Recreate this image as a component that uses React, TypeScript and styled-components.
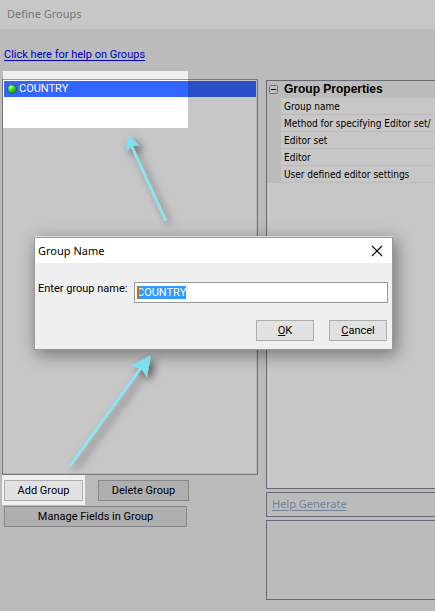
import React from "react";
import styled, { createGlobalStyle, css } from "styled-components";

const GlobalStyle = createGlobalStyle`
  * { box-sizing: border-box; }
  html, body { margin: 0; background: #f0f0f0; overflow: hidden; }
  body { font: 11px/14px Roboto, "Liberation Sans", sans-serif; color: #000; }
`;

const Window = styled.main`
  position: relative;
  display: flex;
  flex-direction: column;
  min-height: 100vh;
  overflow: hidden;
`;

const TitleBar = styled.header`
  flex: none;
  height: 29px;
  padding: 0 7px;
  background: #fff;
  color: #999;
  font: 11px/28px "Noto Sans", sans-serif;
`;

const HelpRow = styled.div`
  padding: 19px 4px 0;
  height: 50px;
`;

const HelpLink = styled.a`
  color: #0000f8;
  text-decoration: underline;
  text-underline-offset: 2px;
`;

const Columns = styled.div`
  flex: 1;
  display: grid;
  grid-template-columns: 256px 1fr;
  column-gap: 8px;
  padding: 0 0 11px 2px;
`;

const LeftColumn = styled.section`
  display: flex;
  flex-direction: column;
  gap: 5px;
`;

const GroupList = styled.ul`
  height: 396px;
  margin: 0;
  padding: 1px;
  list-style: none;
  background: #fff;
  border: 1px solid #999;
  box-shadow: inset -1px -1px 0 #e8e8e8;
`;

const GroupItem = styled.li`
  display: flex;
  align-items: center;
  gap: 2px;
  height: 16px;
  padding-left: 3px;
  background: #3366ff;
  color: #fff;
`;

const ButtonRow = styled.div`
  display: flex;
  padding: 0 2px;
  gap: 15px;
`;

const Button = styled.button<{ $width: number }>`
  width: ${(p) => p.$width}px;
  height: 21px;
  padding: 0;
  border: 1px solid #adadad;
  background: #e1e1e1;
  color: #000;
  font: inherit;
`;

const RightColumn = styled.section`
  display: flex;
  flex-direction: column;
  gap: 3px;
  min-width: 0;
  padding-top: 1px;
`;

const panel = css`
  border: 1px solid #848893;
  border-right: 0;
`;

const PropertyPanel = styled.div`
  ${panel}
  height: 409px;
  overflow: hidden;
  background: #fff;
`;

const PropertyHeading = styled.h2`
  display: flex;
  align-items: center;
  gap: 5px;
  height: 17px;
  margin: 0;
  padding-left: 2px;
  background: #f0f0f0;
  font: bold 12px/17px "Liberation Sans", sans-serif;
  white-space: nowrap;
`;

const PropertyRows = styled.ul`
  margin: 0;
  padding: 0 0 0 14px;
  list-style: none;
  background: #f0f0f0;
`;

const PropertyRow = styled.li`
  height: 17px;
  padding-left: 3px;
  border-bottom: 1px solid #f0f0f0;
  background: #fff;
  font: 10px/17px "DejaVu Sans Condensed", sans-serif;
  white-space: nowrap;
`;

const HelpPanel = styled.div`
  ${panel}
  height: 25px;
  padding: 0 5px;
  font: 11px/22px "Noto Sans", sans-serif;
`;

const GenerateLink = styled.a`
  color: #90aac8;
  text-decoration: underline;
  text-underline-offset: 2px;
`;

const DescriptionPanel = styled.div`
  ${panel}
  flex: 1;
`;

const Annotation = styled.svg`
  position: absolute;
  inset: 0;
  width: 100%;
  height: 100%;
  pointer-events: none;
`;

const Dialog = styled.section`
  position: absolute;
  top: 237px;
  left: 34px;
  right: 42px;
  border: 1px solid #999;
  background: #f0f0f0;
  box-shadow: 0 -1px 0 #dedede, 3px 4px 16px 1px rgba(0, 0, 0, 0.4);
`;

const DialogTitle = styled.header`
  display: flex;
  align-items: center;
  justify-content: space-between;
  height: 25px;
  padding: 0 9px 0 3px;
  background: #fff;
`;

const DialogHeading = styled.h1`
  margin: 0;
  font: 11px/24px "Noto Sans", sans-serif;
`;

const CloseButton = styled.button`
  display: flex;
  padding: 0;
  border: 0;
  background: none;
`;

const Field = styled.div`
  display: flex;
  align-items: flex-start;
  padding: 19px 4px 0 3px;
`;

const FieldLabel = styled.label`
  width: 96px;
  white-space: nowrap;
`;

const InputWrap = styled.div`
  position: relative;
  flex: 1;
  display: flex;
`;

const NameInput = styled.input`
  flex: 1;
  min-width: 0;
  height: 21px;
  padding: 0 2px;
  border: 1px solid #999;
  border-radius: 0;
  outline: none;
  background: #fff;
  font: inherit;
  &::selection { background: #3399ff; color: #fff; }
`;

const Caret = styled.span`
  position: absolute;
  top: 4px;
  left: 3px;
  width: 2px;
  height: 13px;
  background: #c86a12;
`;

const DialogActions = styled.footer`
  display: flex;
  justify-content: flex-end;
  gap: 15px;
  padding: 17px 5px 8px;
`;

function StatusDot() {
  return (
    <svg width="10" height="10" viewBox="0 0 10 10" aria-hidden="true">
      <defs>
        <radialGradient id="dot" cx="35%" cy="30%" r="75%">
          <stop offset="0" stopColor="#c8ffc0" />
          <stop offset=".4" stopColor="#40dc40" />
          <stop offset="1" stopColor="#089808" />
        </radialGradient>
      </defs>
      <circle cx="5" cy="5" r="4.5" fill="url(#dot)" stroke="#20702c" />
    </svg>
  );
}

function CollapseIcon() {
  return (
    <svg width="10" height="10" viewBox="0 0 10 10" aria-hidden="true">
      <rect x=".5" y=".5" width="8" height="8" rx="1" fill="#f8f8f8" stroke="#909090" />
      <path d="M2 4.5h5" stroke="#000" />
    </svg>
  );
}

function Spotlight() {
  return (
    <Annotation aria-hidden="true">
      <path
        fillRule="evenodd"
        fill="#000"
        fillOpacity=".22"
        d="M0 0H4000V4000H0ZM3 71H188V128H3ZM2 475H85V505H2Z"
      />
    </Annotation>
  );
}

function Arrows() {
  return (
    <Annotation aria-hidden="true">
      <defs>
        <filter id="arrowShadow" x="-30%" y="-30%" width="170%" height="170%">
          <feDropShadow dx="4" dy="4" stdDeviation="4" floodColor="#000" floodOpacity=".6" />
        </filter>
      </defs>
      <g stroke="#84e8f8" strokeWidth="2.4" strokeLinecap="round" filter="url(#arrowShadow)">
        <path d="M165.500 220L132 147" />
        <path d="M127.500 134.500L126 152L131.500 146L139.500 145.500Z" fill="#7ce0ee" stroke="none" />
      </g>
      <g stroke="#84e8f8" strokeWidth="2.4" strokeLinecap="round" filter="url(#arrowShadow)">
        <path d="M71 464.500L140 369" />
        <path d="M151 355L131 366L139.500 368L142.500 370.500L147 377Z" fill="#7ce0ee" stroke="none" />
      </g>
    </Annotation>
  );
}

const properties = [
  "Group name",
  "Method for specifying Editor set/",
  "Editor set",
  "Editor",
  "User defined editor settings",
];

export default function App() {
  return (
    <>
      <GlobalStyle />
      <Window>
        <TitleBar>Define Groups</TitleBar>
        <HelpRow>
          <HelpLink href="#groups-help">Click here for help on Groups</HelpLink>
        </HelpRow>
        <Columns>
          <LeftColumn>
            <GroupList>
              <GroupItem>
                <StatusDot />
                COUNTRY
              </GroupItem>
            </GroupList>
            <ButtonRow>
              <Button $width={79}>Add Group</Button>
              <Button $width={91}>Delete Group</Button>
            </ButtonRow>
            <ButtonRow>
              <Button $width={183}>Manage Fields in Group</Button>
            </ButtonRow>
          </LeftColumn>
          <RightColumn>
            <PropertyPanel>
              <PropertyHeading>
                <CollapseIcon />
                Group Properties
              </PropertyHeading>
              <PropertyRows>
                {properties.map((name) => (
                  <PropertyRow key={name}>{name}</PropertyRow>
                ))}
              </PropertyRows>
            </PropertyPanel>
            <HelpPanel>
              <GenerateLink href="#generate">Help Generate</GenerateLink>
            </HelpPanel>
            <DescriptionPanel />
          </RightColumn>
        </Columns>
        <Spotlight />
        <Dialog role="dialog" aria-labelledby="dialog-title">
          <DialogTitle>
            <DialogHeading id="dialog-title">Group Name</DialogHeading>
            <CloseButton aria-label="Close">
              <svg width="12" height="12" viewBox="0 0 12 12" aria-hidden="true">
                <path d="M1 1L11 11M11 1L1 11" stroke="#000" strokeWidth="1.1" />
              </svg>
            </CloseButton>
          </DialogTitle>
          <Field>
            <FieldLabel htmlFor="group-name">Enter group name:</FieldLabel>
            <InputWrap>
              <NameInput
                id="group-name"
                defaultValue="COUNTRY"
                autoFocus
                onFocus={(e) => e.currentTarget.select()}
              />
              <Caret />
            </InputWrap>
          </Field>
          <DialogActions>
            <Button $width={58}><u>O</u>K</Button>
            <Button $width={58}><u>C</u>ancel</Button>
          </DialogActions>
        </Dialog>
        <Arrows />
      </Window>
    </>
  );
}
